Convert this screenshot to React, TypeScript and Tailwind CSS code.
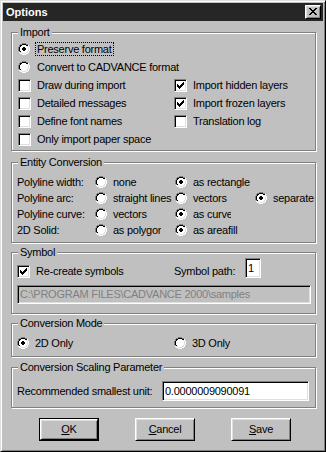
import React from "react";

const PAL: Record<string, string> = {
  G: "#808080",
  K: "#000000",
  W: "#ffffff",
  L: "#dfdfdf",
  X: "#000000",
};

function Bitmap({ rows, w, h, className }: { rows: string[]; w: number; h: number; className?: string }) {
  const rects: React.ReactElement[] = [];
  rows.forEach((row, y) => {
    let x = 0;
    while (x < row.length) {
      const c = row[x];
      if (c === ".") {
        x++;
        continue;
      }
      let e = x;
      while (e < row.length && row[e] === c) e++;
      rects.push(<rect key={`${x}-${y}`} x={x} y={y} width={e - x} height={1} fill={PAL[c]} />);
      x = e;
    }
  });
  return (
    <svg width={w} height={h} viewBox={`0 0 ${w} ${h}`} shapeRendering="crispEdges" className={className}>
      {rects}
    </svg>
  );
}

const RADIO_BASE = [
  "....GGGG....",
  "..GGKKKKGG..",
  ".GKKWWWWKKW.",
  ".GKWWWWWWLW.",
  "GKWWWWWWWWLW",
  "GKWWWWWWWWLW",
  "GKWWWWWWWWLW",
  "GKWWWWWWWWLW",
  ".GKWWWWWWLW.",
  ".WLLWWWWLLW.",
  "..WWLLLLWW..",
  "....WWWW....",
];

const RADIO_ON = RADIO_BASE.map((r, y) => {
  if (y === 4 || y === 7) return r.slice(0, 5) + "XX" + r.slice(7);
  if (y === 5 || y === 6) return r.slice(0, 4) + "XXXX" + r.slice(8);
  return r;
});

const CHECK = [
  "......X",
  ".....XX",
  "X...XXX",
  "XX.XXX.",
  "XXXXX..",
  ".XXX...",
  "..X....",
];

const CLOSE_X = [
  "XX....XX",
  ".XX..XX.",
  "..XXXX..",
  "...XX...",
  "..XXXX..",
  ".XX..XX.",
  "XX....XX",
];

function Radio({ checked }: { checked?: boolean }) {
  return <Bitmap rows={checked ? RADIO_ON : RADIO_BASE} w={12} h={12} className="shrink-0" />;
}

function Check({ checked }: { checked?: boolean }) {
  return (
    <div className="relative box-border h-[13px] w-[13px] shrink-0 border border-t-[#808080] border-l-[#808080] border-r-white border-b-white bg-white shadow-[inset_1px_1px_0_#000,inset_-1px_-1px_0_#dfdfdf]">
      {checked && <Bitmap rows={CHECK} w={7} h={7} className="absolute left-[2px] top-[2px]" />}
    </div>
  );
}

function CheckRow({ label, checked, className }: { label: string; checked?: boolean; className?: string }) {
  return (
    <div className={`flex h-[18px] items-center ${className ?? ""}`}>
      <Check checked={checked} />
      <span className="ml-[6px] whitespace-nowrap leading-[13px]">{label}</span>
    </div>
  );
}

function Group({ title, className, children }: { title: string; className: string; children: React.ReactNode }) {
  return (
    <div className={`relative box-border w-[305px] border border-[#808080] shadow-[inset_1px_1px_0_#fff,1px_1px_0_#fff] ${className}`}>
      <span className="absolute left-[6px] top-[-7px] bg-[#c0c0c0] px-[2px] leading-[13px] whitespace-nowrap">{title}</span>
      {children}
    </div>
  );
}

function RadioCell({ label, checked, labelClass }: { label: string; checked?: boolean; labelClass?: string }) {
  return (
    <div className="flex h-[16px] items-center">
      <Radio checked={checked} />
      <span className={`ml-[6px] whitespace-nowrap leading-[13px] ${labelClass ?? ""}`}>{label}</span>
    </div>
  );
}

function Button({ label, def }: { label: React.ReactNode; def?: boolean }) {
  const inner = (
    <div className="box-border flex h-full w-full items-center justify-center border border-t-white border-l-white border-r-black border-b-black shadow-[inset_1px_1px_0_#dfdfdf,inset_-1px_-1px_0_#808080]">
      <span className="leading-[13px]">{label}</span>
    </div>
  );
  if (def) {
    return <div className="box-border h-[23px] w-[60px] border border-black">{inner}</div>;
  }
  return <div className="box-border h-[23px] w-[60px]">{inner}</div>;
}

export default function App() {
  return (
    <div className="box-border h-[452px] w-[326px] border border-t-[#dfdfdf] border-l-[#dfdfdf] border-r-black border-b-black bg-[#c0c0c0] p-[2px] font-['Liberation_Sans',Arial,sans-serif] text-[11px] tracking-[-0.25px] text-black shadow-[inset_1px_1px_0_#fff,inset_-1px_-1px_0_#808080]">
      {/* Title bar */}
      <div className="flex h-[18px] items-center justify-between bg-[#262626] pl-[3px] pr-[2px]">
        <span className="text-[11px] font-bold leading-[13px] tracking-normal text-white">Options</span>
        <div className="relative box-border h-[14px] w-[16px] border border-t-white border-l-white border-r-black border-b-black bg-[#c0c0c0] shadow-[inset_1px_1px_0_#dfdfdf,inset_-1px_-1px_0_#808080]">
          <Bitmap rows={CLOSE_X} w={8} h={7} className="absolute left-[3px] top-[2px]" />
        </div>
      </div>

      <div className="pl-[8px]">
        {/* Import */}
        <Group title="Import" className="mt-[11px] h-[119px]">
          <div className="pl-[6px] pt-[7px]">
            <div className="flex h-[18px] items-center">
              <Radio checked />
              <span className="ml-[5px] border border-dotted border-black px-[1px] leading-[12px] whitespace-nowrap">Preserve format</span>
            </div>
            <div className="flex h-[18px] items-center">
              <Radio />
              <span className="ml-[7px] leading-[13px] whitespace-nowrap">Convert to CADVANCE format</span>
            </div>
            <div className="grid grid-cols-[156px_1fr]">
              <CheckRow label="Draw during import" />
              <CheckRow label="Import hidden layers" checked />
              <CheckRow label="Detailed messages" />
              <CheckRow label="Import frozen layers" checked />
              <CheckRow label="Define font names" />
              <CheckRow label="Translation log" />
            </div>
            <CheckRow label="Only import paper space" />
          </div>
        </Group>

        {/* Entity Conversion */}
        <Group title="Entity Conversion" className="mt-[11px] h-[81px]">
          <div className="grid grid-cols-[78px_80px_80px_1fr] pl-[5px] pt-[11px]">
            <div className="flex h-[16px] items-center whitespace-nowrap">Polyline width:</div>
            <RadioCell label="none" />
            <RadioCell label="as rectangle" checked />
            <div />

            <div className="flex h-[16px] items-center whitespace-nowrap">Polyline arc:</div>
            <RadioCell label="straight lines" />
            <RadioCell label="vectors" />
            <RadioCell label="separate" checked />

            <div className="flex h-[16px] items-center whitespace-nowrap">Polyline curve:</div>
            <RadioCell label="vectors" />
            <RadioCell label="as curve" checked labelClass="w-[38px] overflow-hidden" />
            <div />

            <div className="flex h-[16px] items-center whitespace-nowrap">2D Solid:</div>
            <RadioCell label="as polygon" labelClass="w-[48px] overflow-hidden" />
            <RadioCell label="as areafill" checked />
            <div />
          </div>
        </Group>

        {/* Symbol */}
        <Group title="Symbol" className="mt-[9px] h-[62px]">
          <div className="pl-[5px] pt-[5px]">
            <div className="flex items-start">
              <div className="mt-[7px] flex w-[157px] items-center">
                <Check checked />
                <span className="ml-[6px] leading-[13px] whitespace-nowrap">Re-create symbols</span>
              </div>
              <span className="mt-[7px] w-[71px] leading-[13px] whitespace-nowrap">Symbol path:</span>
              <div className="box-border flex h-[20px] w-[16px] items-center border border-t-[#808080] border-l-[#808080] border-r-white border-b-white bg-white pl-[2px] shadow-[inset_1px_1px_0_#000,inset_-1px_-1px_0_#dfdfdf]">
                <span className="leading-[13px]">1</span>
              </div>
            </div>
            <div className="mt-[7px] box-border flex h-[19px] w-[294px] items-center border border-t-[#808080] border-l-[#808080] border-r-white border-b-white pl-[2px] text-[#808080] shadow-[inset_1px_1px_0_#000,inset_-1px_-1px_0_#dfdfdf]">
              <span className="leading-[13px] whitespace-nowrap">C:\PROGRAM FILES\CADVANCE 2000\samples</span>
            </div>
          </div>
        </Group>

        {/* Conversion Mode */}
        <Group title="Conversion Mode" className="mt-[9px] h-[34px]">
          <div className="flex pl-[5px] pt-[11px]">
            <div className="w-[157px]">
              <RadioCell label="2D Only" checked />
            </div>
            <RadioCell label="3D Only" />
          </div>
        </Group>

        {/* Conversion Scaling Parameter */}
        <Group title="Conversion Scaling Parameter" className="mt-[10px] h-[41px]">
          <div className="flex items-center pl-[5px] pt-[13px]">
            <span className="w-[145px] leading-[13px] whitespace-nowrap">Recommended smallest unit:</span>
            <div className="box-border flex h-[20px] w-[147px] items-center border border-t-[#808080] border-l-[#808080] border-r-white border-b-white bg-white pl-[2px] shadow-[inset_1px_1px_0_#000,inset_-1px_-1px_0_#dfdfdf]">
              <span className="leading-[13px]">0.0000009090091</span>
            </div>
          </div>
        </Group>
      </div>

      {/* Buttons */}
      <div className="mt-[10px] flex gap-[36px] pl-[36px]">
        <Button def label={<><span className="underline">O</span>K</>} />
        <Button label={<><span className="underline">C</span>ancel</>} />
        <Button label={<><span className="underline">S</span>ave</>} />
      </div>
    </div>
  );
}
